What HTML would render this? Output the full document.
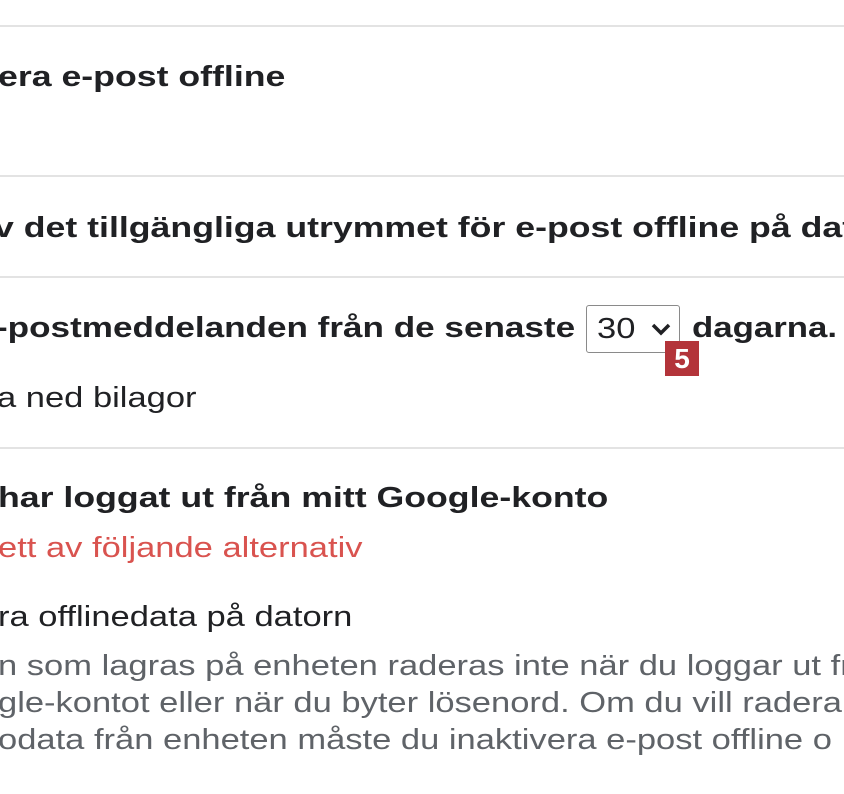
<!DOCTYPE html>
<html><head><meta charset="utf-8"><style>
html,body{margin:0;padding:0;width:844px;height:794px;overflow:hidden;background:#fff;font-family:"Liberation Sans",sans-serif;color:#202124}
.t{position:absolute;white-space:nowrap;font-size:29px;line-height:36px;transform-origin:0 50%;transform:scaleX(1.19)}
.b{font-weight:bold;transform:scaleX(1.23)}
.hr{position:absolute;left:0;width:844px;height:2px;background:#e3e3e3}
.g{color:#5f6368}
</style></head><body>
<div class="hr" style="top:25px"></div>
<div class="t b" style="left:-2px;top:59px">era e-post offline</div>
<div class="hr" style="top:175px"></div>
<div class="t b" style="left:-6px;top:210px">v det tillgängliga utrymmet för e-post offline på dat</div>
<div class="hr" style="top:276px"></div>
<div class="t b" style="left:-4px;top:310px;transform:scaleX(1.21)">-postmeddelanden från de senaste</div>
<div style="position:absolute;left:586px;top:305px;width:94px;height:48px;border:1.5px solid #8a8a8a;border-radius:3px;box-sizing:border-box"></div>
<div class="t" style="left:597px;top:311px">30</div>
<svg style="position:absolute;left:650px;top:322px" width="22" height="14" viewBox="0 0 22 14"><path d="M3 3 L11 11 L19 3" stroke="#202124" stroke-width="3.5" fill="none"/></svg>
<div class="t b" style="left:692px;top:310px;transform:scaleX(1.2)">dagarna.</div>
<div style="position:absolute;left:665px;top:341px;width:34px;height:35px;background:#b3343a;color:#fff;font-weight:bold;font-size:28px;line-height:35px;text-align:center">5</div>
<div class="t" style="left:-3px;top:380px">a ned bilagor</div>
<div class="hr" style="top:447px"></div>
<div class="t b" style="left:-2px;top:480px">har loggat ut från mitt Google-konto</div>
<div class="t" style="left:-2px;top:530px;color:#d9534f">ett av följande alternativ</div>
<div class="t" style="left:-2px;top:599px">ra offlinedata på datorn</div>
<div class="t g" style="left:-2px;top:648px">n som lagras på enheten raderas inte när du loggar ut fr</div>
<div class="t g" style="left:-2px;top:685px">gle-kontot eller när du byter lösenord. Om du vill radera</div>
<div class="t g" style="left:-2px;top:722px">odata från enheten måste du inaktivera e-post offline o</div>
</body></html>
